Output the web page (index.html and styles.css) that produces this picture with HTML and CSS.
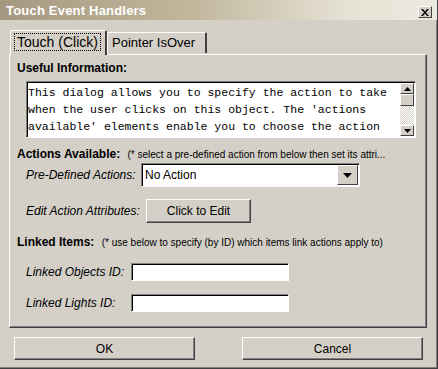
FILE: index.html
```html
<!DOCTYPE html>
<html lang="en">
<head>
    <meta charset="UTF-8">
    <title>Touch Event Handlers</title>
    <link rel="stylesheet" href="styles.css">
</head>
<body>

<div class="window">
    <div class="titlebar">
        <span class="title">Touch Event Handlers</span>
        <button class="close">
            <svg width="8" height="7" viewBox="0 0 8 7"><path d="M0 0h2l2 2.5L6 0h2L5 3.5 8 7H6L4 4.5 2 7H0l3-3.5z" fill="#000"/></svg>
        </button>
    </div>

    <div class="tabs">
        <div class="tab active"><span class="focus">Touch (Click)</span></div>
        <div class="tab">Pointer IsOver</div>
    </div>

    <div class="panel">
        <div class="heading">Useful Information:</div>
        <div class="info">
            <div class="info-text">This dialog allows you to specify the action to take<br>when the user clicks on this object. The 'actions<br>available' elements enable you to choose the action</div>
            <div class="scrollbar">
                <div class="sb-btn"><svg width="7" height="4" viewBox="0 0 7 4"><path d="M3.5 0L7 4H0z" fill="#000"/></svg></div>
                <div class="sb-thumb"></div>
                <div class="sb-track"></div>
                <div class="sb-btn"><svg width="7" height="4" viewBox="0 0 7 4"><path d="M0 0h7L3.5 4z" fill="#000"/></svg></div>
            </div>
        </div>

        <div class="heading section">Actions Available: <span class="hint">(* select a pre-defined action from below then set its attri...</span></div>
        <div class="row row-select">
            <label class="label">Pre-Defined Actions:</label>
            <div class="select">
                <span class="select-value">No Action</span>
                <div class="select-btn"><svg width="9" height="5" viewBox="0 0 9 5"><path d="M0 0h9L4.5 5z" fill="#000"/></svg></div>
            </div>
        </div>
        <div class="row row-edit">
            <label class="label">Edit Action Attributes:</label>
            <button class="btn edit-btn">Click to Edit</button>
        </div>

        <div class="heading section linked">Linked Items: <span class="hint">(* use below to specify (by ID) which items link actions apply to)</span></div>
        <div class="row row-input">
            <label class="label">Linked Objects ID:</label>
            <input class="field" type="text">
        </div>
        <div class="row row-input">
            <label class="label">Linked Lights ID:</label>
            <input class="field" type="text">
        </div>
    </div>

    <div class="footer">
        <button class="btn footer-btn">OK</button>
        <button class="btn footer-btn">Cancel</button>
    </div>
</div>

</body>
</html>
```

FILE: styles.css
```css
body {
    margin: 0;
    font-family: 'Liberation Sans', Arial, sans-serif;
    background-color: #d4d0c8;
}

.window {
    box-sizing: border-box;
    width: 438px;
    height: 369px;
    background-color: #d4d0c8;
    border-right: 1px solid #404040;
    border-bottom: 1px solid #404040;
    box-shadow: inset -1px -1px 0 #808080;
    display: flex;
    flex-direction: column;
}

.titlebar {
    height: 20px;
    display: flex;
    align-items: center;
    justify-content: space-between;
    padding: 0 5px 0 6px;
    background: linear-gradient(to right, #a69880 0%, #c2b89e 45%, #e6e2d6 80%, #ece9de 100%);
}

.title {
    color: #fff;
    font-weight: bold;
    font-size: 13px;
    letter-spacing: 0.2px;
}

.close {
    width: 14px;
    height: 12px;
    margin-top: 4px;
    padding: 0;
    display: flex;
    align-items: center;
    justify-content: center;
    background-color: #d4d0c8;
    border: 1px solid;
    border-color: #fff #404040 #404040 #fff;
}

/* tabs */
.tabs {
    display: flex;
    align-items: flex-end;
    height: 34px;
    padding-left: 10px;
    position: relative;
    z-index: 1;
}

.tab {
    box-sizing: border-box;
    height: 21px;
    width: 100px;
    padding: 2px 0 0 4px;
    font-size: 13px;
    border-top: 1px solid #fff;
    border-left: 1px solid #fff;
    border-right: 2px solid #404040;
    border-radius: 2px 2px 0 0;
    margin-bottom: 1px;
}

.tab.active {
    width: 97px;
    height: 25px;
    padding: 3px 0 0 4px;
    font-size: 14px;
    margin-bottom: -1px;
    background-color: #d4d0c8;
}

.focus {
    display: inline-block;
    padding: 0 2px;
    outline: 1px dotted #000;
    line-height: 16px;
}

/* panel */
.panel {
    box-sizing: border-box;
    height: 274px;
    margin: 0 10px 0 9px;
    padding: 6px 0 0 7px;
    border-top: 1px solid #fff;
    border-left: 1px solid #fff;
    border-right: 1px solid #404040;
    border-bottom: 1px solid #404040;
    box-shadow: inset -1px -1px 0 #808080;
}

.heading {
    font-size: 12px;
    font-weight: bold;
    height: 15px;
}

.hint {
    font-size: 10px;
    font-weight: normal;
    margin-left: 4px;
}

.info {
    box-sizing: border-box;
    display: flex;
    width: 390px;
    height: 57px;
    margin: 5px 0 0 9px;
    background-color: #fff;
    border-top: 1px solid #808080;
    border-left: 1px solid #808080;
    border-right: 1px solid #fff;
    border-bottom: 1px solid #fff;
    box-shadow: inset 1px 1px 0 #000;
}

.info-text {
    flex: 1;
    padding: 2px 0 0 1px;
    font-family: 'Liberation Mono', 'Courier New', monospace;
    font-size: 11.5px;
    line-height: 17px;
    white-space: nowrap;
    overflow: hidden;
}

.scrollbar {
    width: 14px;
    margin: 1px 1px 1px 0;
    display: flex;
    flex-direction: column;
}

.sb-btn,
.sb-thumb {
    box-sizing: border-box;
    height: 11px;
    display: flex;
    align-items: center;
    justify-content: center;
    background-color: #d4d0c8;
    border: 1px solid;
    border-color: #fff #404040 #404040 #fff;
}

.sb-thumb {
    height: 12px;
}

.sb-track {
    flex: 1;
    background-color: #eeece6;
    background-image: repeating-conic-gradient(#d4d0c8 0 25%, #fff 0 50%);
    background-size: 2px 2px;
}

.section {
    margin-top: 9px;
}

.linked {
    margin-top: 12px;
}

.row {
    display: flex;
    align-items: center;
}

.label {
    font-size: 12px;
    font-style: italic;
    padding-left: 9px;
}

.row-select {
    margin-top: 1px;
}

.row-select .label {
    width: 115px;
}

.select {
    box-sizing: border-box;
    display: flex;
    align-items: center;
    width: 219px;
    height: 24px;
    background-color: #fff;
    border-top: 1px solid #808080;
    border-left: 1px solid #808080;
    border-right: 1px solid #fff;
    border-bottom: 1px solid #fff;
    box-shadow: inset 1px 1px 0 #000;
}

.select-value {
    flex: 1;
    font-size: 12px;
    padding-left: 3px;
}

.select-btn {
    box-sizing: border-box;
    width: 21px;
    height: 20px;
    margin-right: 1px;
    display: flex;
    align-items: center;
    justify-content: center;
    background-color: #d4d0c8;
    border: 1px solid;
    border-color: #fff #404040 #404040 #fff;
}

.btn {
    font-family: 'Liberation Sans', Arial, sans-serif;
    font-size: 12px;
    color: #000;
    background-color: #d4d0c8;
    border: 1px solid;
    border-color: #fff #404040 #404040 #fff;
    box-shadow: inset -1px -1px 0 #808080;
    padding: 0;
}

.row-edit {
    margin-top: 12px;
}

.row-edit .label {
    width: 120px;
}

.edit-btn {
    width: 105px;
    height: 24px;
}

.row-input {
    margin-top: 13px;
}

.row-input + .row-input {
    margin-top: 13px;
}

.row-input .label {
    width: 105px;
}

.field {
    box-sizing: border-box;
    width: 158px;
    height: 18px;
    margin: 0;
    background-color: #fff;
    border-top: 1px solid #808080;
    border-left: 1px solid #808080;
    border-right: 1px solid #fff;
    border-bottom: 1px solid #fff;
    box-shadow: inset 1px 1px 0 #000;
}

.footer {
    display: flex;
    justify-content: space-between;
    padding: 9px 14px 0 14px;
}

.footer-btn {
    width: 181px;
    height: 23px;
}
```
